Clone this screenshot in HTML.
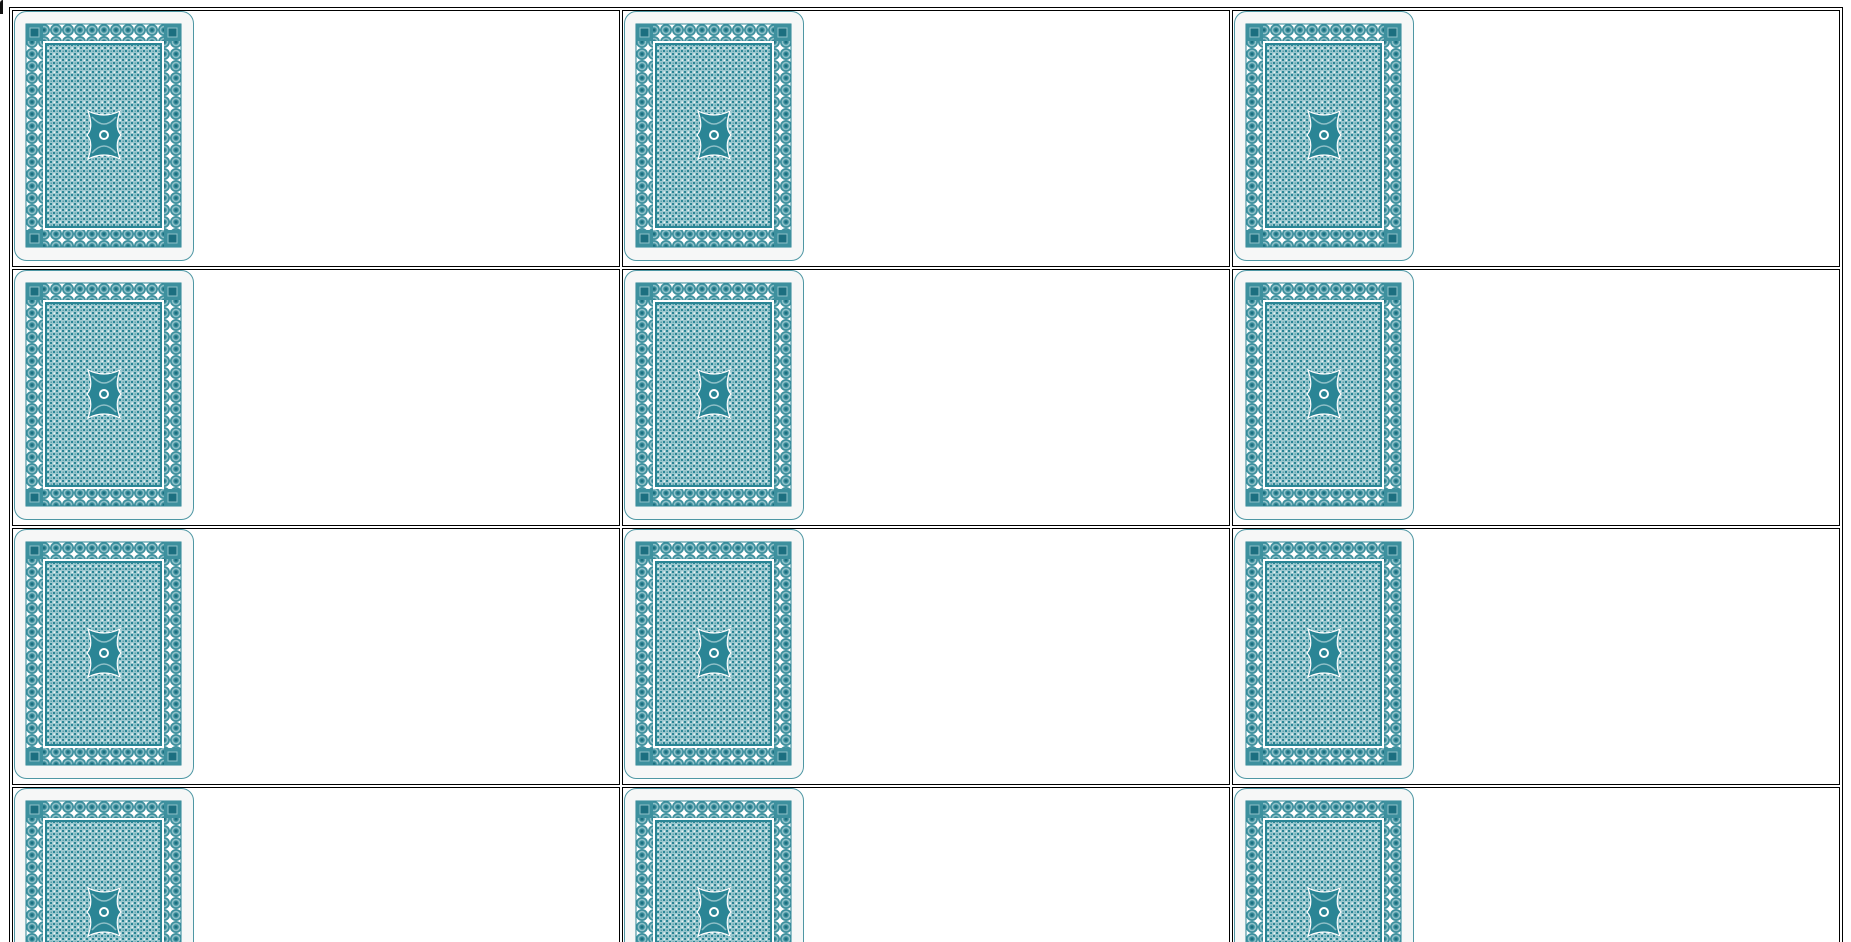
<!DOCTYPE html>
<html><head><meta charset="utf-8"><style>
html,body{margin:0;padding:0;background:#fff;width:1851px;height:942px;overflow:hidden;position:relative}
.outer{position:absolute;left:9px;top:7px;width:1834px;height:935px;border:1px solid #000;border-bottom:none;box-sizing:border-box}
.cell{position:absolute;width:608px;height:257px;border:1px solid #000;box-sizing:border-box;overflow:hidden}
.card{position:absolute;left:1px;top:0px;width:180px;height:250px}
</style></head><body>
<svg width="0" height="0" style="position:absolute">
<defs>
<pattern id="pt" x="0" y="0" width="6" height="6" patternUnits="userSpaceOnUse">
<rect width="6" height="6" fill="#9cc8cf"/>
<rect x="0" y="0" width="2" height="2" fill="#2a8595"/>
<rect x="3" y="3" width="2" height="2" fill="#2a8595"/>
<rect x="3.5" y="0.5" width="1.5" height="1.5" fill="#eef6f7"/>
<rect x="0.5" y="3.5" width="1.5" height="1.5" fill="#5ea3ae"/>
</pattern>
<pattern id="bd" x="12" y="13" width="12" height="12" patternUnits="userSpaceOnUse">
<rect width="12" height="12" fill="#fff"/>
<circle cx="6" cy="6" r="6" fill="#3d909e"/>
<circle cx="6" cy="6" r="4.3" fill="#8fc0c8"/>
<circle cx="6" cy="6" r="2.8" fill="#3d909e"/>
<circle cx="6" cy="6" r="1.5" fill="#1c6f80"/>
</pattern>
<g id="cd">
<rect x="0.5" y="0.5" width="179" height="249" rx="12" fill="#f6f7f7" stroke="#4e97a4"/>
<rect x="12" y="13" width="155" height="223" fill="url(#bd)" stroke="#2a8595"/>
<rect x="12" y="13" width="17" height="17" fill="#3d909e"/><rect x="16" y="17" width="9" height="9" fill="#1c6f80" stroke="#8fc0c8"/>
<rect x="150" y="13" width="17" height="17" fill="#3d909e"/><rect x="154" y="17" width="9" height="9" fill="#1c6f80" stroke="#8fc0c8"/>
<rect x="12" y="219" width="17" height="17" fill="#3d909e"/><rect x="16" y="223" width="9" height="9" fill="#1c6f80" stroke="#8fc0c8"/>
<rect x="150" y="219" width="17" height="17" fill="#3d909e"/><rect x="154" y="223" width="9" height="9" fill="#1c6f80" stroke="#8fc0c8"/>
<rect x="29" y="30" width="121" height="189" fill="#fff"/>
<rect x="31" y="32" width="117" height="185" fill="#2a8595"/>
<rect x="33" y="34" width="113" height="181" fill="url(#pt)"/>
<path d="M74,100 Q90,108 106,100 Q100,117 107,124 Q100,131 106,148 Q90,140 74,148 Q80,131 73,124 Q80,117 74,100Z" fill="#2a8595" stroke="#fff" stroke-width="1.2"/>
<path d="M78,106 Q90,120 102,106 M78,142 Q90,128 102,142" fill="none" stroke="#8fc0c8" stroke-width="1.5"/>
<circle cx="90" cy="124" r="5" fill="#fff"/><circle cx="90" cy="124" r="3" fill="#2a8595"/>
</g>
</defs></svg>
<div style="position:absolute;left:0;top:0;width:3px;height:14px;background:#111;border-radius:3px 0 0 0"></div>
<div class="outer"></div>
<div class="cell" style="left:12px;top:10px"><svg class="card" viewBox="0 0 180 250"><use href="#cd"/></svg></div>
<div class="cell" style="left:622px;top:10px"><svg class="card" viewBox="0 0 180 250"><use href="#cd"/></svg></div>
<div class="cell" style="left:1232px;top:10px"><svg class="card" viewBox="0 0 180 250"><use href="#cd"/></svg></div>
<div class="cell" style="left:12px;top:269px"><svg class="card" viewBox="0 0 180 250"><use href="#cd"/></svg></div>
<div class="cell" style="left:622px;top:269px"><svg class="card" viewBox="0 0 180 250"><use href="#cd"/></svg></div>
<div class="cell" style="left:1232px;top:269px"><svg class="card" viewBox="0 0 180 250"><use href="#cd"/></svg></div>
<div class="cell" style="left:12px;top:528px"><svg class="card" viewBox="0 0 180 250"><use href="#cd"/></svg></div>
<div class="cell" style="left:622px;top:528px"><svg class="card" viewBox="0 0 180 250"><use href="#cd"/></svg></div>
<div class="cell" style="left:1232px;top:528px"><svg class="card" viewBox="0 0 180 250"><use href="#cd"/></svg></div>
<div class="cell" style="left:12px;top:787px;height:155px;border-bottom:none"><svg class="card" viewBox="0 0 180 250"><use href="#cd"/></svg></div>
<div class="cell" style="left:622px;top:787px;height:155px;border-bottom:none"><svg class="card" viewBox="0 0 180 250"><use href="#cd"/></svg></div>
<div class="cell" style="left:1232px;top:787px;height:155px;border-bottom:none"><svg class="card" viewBox="0 0 180 250"><use href="#cd"/></svg></div>
</body></html>
